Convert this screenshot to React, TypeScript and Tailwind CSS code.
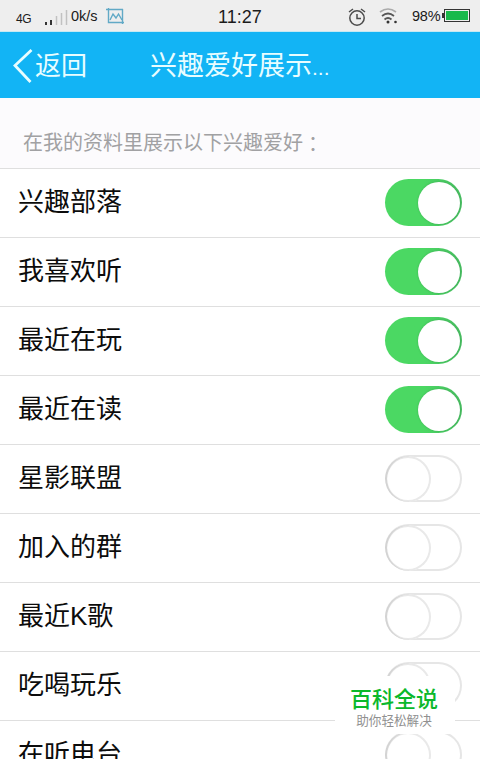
type Interest = { name: string; on: boolean };

const interests: Interest[] = [
  { name: '兴趣部落', on: true },
  { name: '我喜欢听', on: true },
  { name: '最近在玩', on: true },
  { name: '最近在读', on: true },
  { name: '星影联盟', on: false },
  { name: '加入的群', on: false },
  { name: '最近K歌', on: false },
  { name: '吃喝玩乐', on: false },
  { name: '在听电台', on: false },
];

function Toggle({ on }: { on: boolean }) {
  return on ? (
    <button className="mb-px flex h-[47px] w-[77px] shrink-0 items-center justify-end rounded-full bg-gradient-to-r from-[#4bd863] from-50% to-[#48bd61] pr-[2px]">
      <span className="size-[42px] rounded-full bg-white shadow-[0_0_2px_rgba(20,90,40,0.3)]" />
    </button>
  ) : (
    <button className="mb-px flex h-[47px] w-[77px] shrink-0 items-center overflow-hidden rounded-full bg-white shadow-[inset_0_0_0_2px_#e6e6e6]">
      <span className="size-[46px] shrink-0 rounded-full bg-white shadow-[inset_2px_0_1px_#d2d2d2,inset_0_0_0_2px_#e9e9e9]" />
    </button>
  );
}

function StatusBar() {
  return (
    <div className="flex h-8 items-start border-b border-[#c5e9f2] bg-[#eeeeee] pl-4 pr-[9px] text-[#1b1b1b]">
      <span className="mt-[12px] w-[28px] text-[12px] leading-[14px] tracking-[-0.4px]">4G</span>
      <svg className="mt-2 h-[18px] w-[25px]" viewBox="0 0 25 18">
        <path d="M2 14v3M7 12v5" stroke="#333" strokeWidth="2" />
        <path d="M12.500 8v9M17.500 5v12M22.500 2v15" stroke="#c1c1c1" strokeWidth="1.500" />
      </svg>
      <span className="ml-[2px] mt-[7px] w-[34px] whitespace-nowrap text-[14.500px] leading-[18px]">0k/s</span>
      <svg className="mt-2 h-[17px] w-[20px]" viewBox="0 0 20 17" fill="none" stroke="#61a9c6" strokeWidth="1.400">
        <path d="M1 1.500h17M3.500 0v14.500H19M17.500 1v15" />
        <path d="m5 12 3-6 3 4 2.500-4 3.500 6" />
      </svg>
      <span className="ml-[93px] mt-[6px] w-[50px] text-[18px] leading-[22px]">11:27</span>
      <svg className="ml-[80px] mt-2 h-[19px] w-[18px]" viewBox="0 0 18 19" fill="none" stroke="#4c4c4c" strokeWidth="1.500">
        <circle cx="9" cy="10" r="7.200" />
        <path d="M9 6v4.500h4M1 4l4-3M17 4l-4-3" />
      </svg>
      <svg className="ml-[13px] mt-2 h-[17px] w-[20px]" viewBox="0 0 20 17" fill="none">
        <path d="M1 4q8-6 16 0" stroke="#aaa" strokeWidth="1.700" />
        <path d="M3 8q6-5 12 0M5.500 11.500q3.500-3 7 0" stroke="#555" strokeWidth="1.700" />
        <circle cx="9" cy="14" r="1.500" fill="#333" />
        <circle cx="16.500" cy="14" r="1.300" fill="#333" />
      </svg>
      <span className="ml-[13px] mt-[7px] w-[30px] whitespace-nowrap text-[14.500px] leading-[18px] tracking-[-0.2px]">98%</span>
      <svg className="mt-[9px] h-[13px] w-[28px]" viewBox="0 0 28 13">
        <path d="M1 4v5" stroke="#333" strokeWidth="2" />
        <rect x="2.500" y=".500" width="25" height="12" fill="#eee" stroke="#333" />
        <rect x="4" y="2" width="22" height="9" fill="#18b94b" />
      </svg>
    </div>
  );
}

export default function App() {
  return (
    <div className="relative h-[759px] w-[480px] overflow-hidden bg-white font-['Liberation_Sans','Noto_Sans_CJK_SC',sans-serif]">
      <StatusBar />
      <header className="flex h-[66px] items-center bg-[#12b4f5] pl-3 text-[#e8fdff]">
        <svg className="mt-px h-[36px] w-[22px]" viewBox="0 0 22 36" fill="none" stroke="currentColor" strokeWidth="2.800">
          <path d="M19.500 2 3 17.500 18.500 34" />
        </svg>
        <span className="ml-px w-[115px] pt-[2px] text-[26px] leading-[66px]">返回</span>
        <h1 className="whitespace-nowrap pt-[3px] text-[27px] leading-[64px]">
          兴趣爱好展示<span className="text-[21px]">...</span>
        </h1>
      </header>
      <p className="h-[70px] whitespace-nowrap bg-[#fcfbfd] pl-[23px] pt-[30px] text-[20px] leading-[30px] text-[#a1a1a3]">
        在我的资料里展示以下兴趣爱好<span className="inline-block translate-y-[2px] font-['Noto_Sans_CJK_TC',sans-serif] leading-none" lang="zh-TW">：</span>
      </p>
      <ul>
        {interests.map((item) => (
          <li key={item.name} className="flex h-[69px] items-center justify-between border-t border-[#dfdfdf] pl-[18px] pr-[18px]">
            <span className="pb-[3px] text-[26px] leading-[40px] text-[#0c0c0c]">{item.name}</span>
            <Toggle on={item.on} />
          </li>
        ))}
      </ul>
      <div className="absolute left-[335px] top-[676px] flex h-[58px] w-[120px] flex-col items-center bg-white pr-[2px] pt-[11px]">
        <span className="text-[22px] font-medium leading-[26px] text-[#0bb82b]">百科全说</span>
        <span className="whitespace-nowrap text-[12.600px] leading-[16px] text-[#909090]">助你轻松解决</span>
      </div>
    </div>
  );
}
